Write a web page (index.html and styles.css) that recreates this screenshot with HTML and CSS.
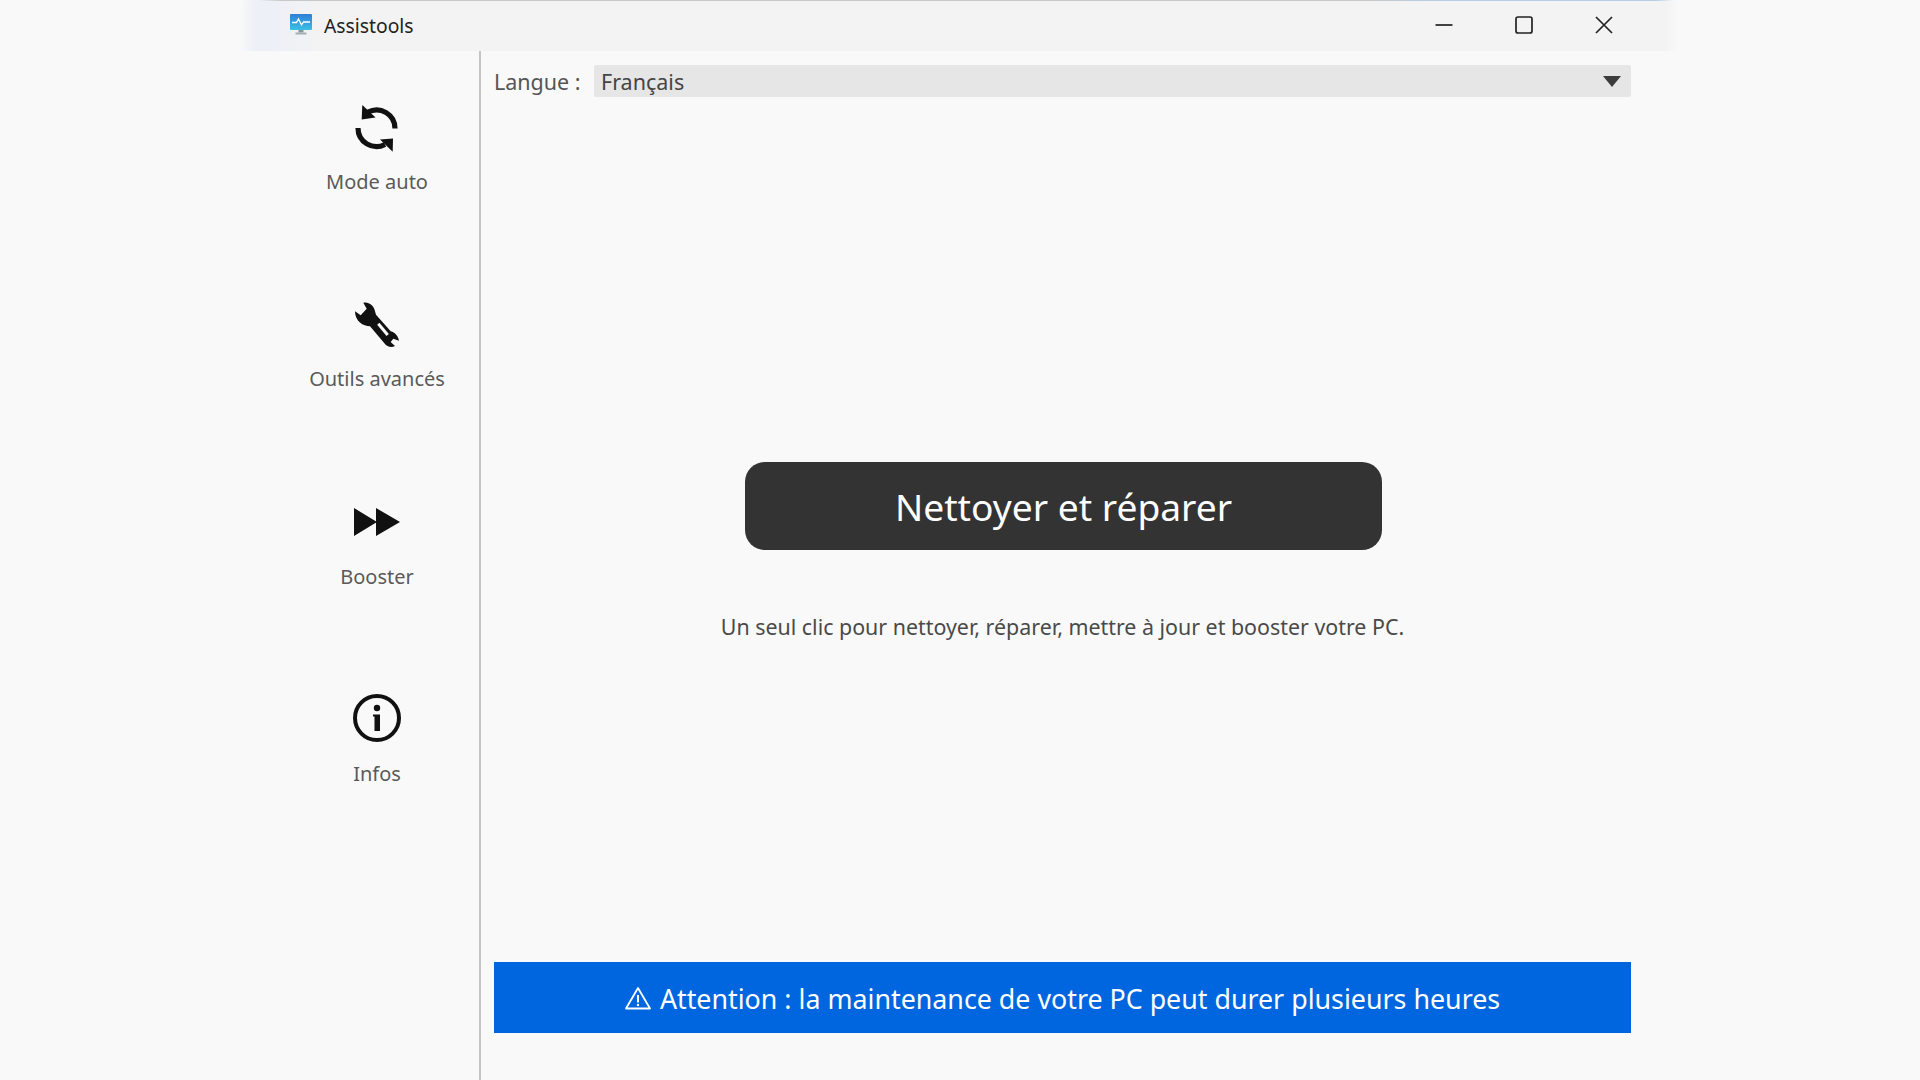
FILE: index.html
```html
<!DOCTYPE html>
<html lang="fr">
<head>
<meta charset="utf-8">
<title>Assistools</title>
<link rel="stylesheet" href="styles.css">
</head>
<body>
<div class="window">
  <header class="titlebar">
    <div class="title">
      <svg class="app-icon" viewBox="0 0 22 22" aria-hidden="true">
        <defs><linearGradient id="scr" x1="0" y1="0" x2="0" y2="1"><stop offset="0" stop-color="#2f7fd6"/><stop offset="1" stop-color="#3bbfe6"/></linearGradient></defs>
        <rect x="0" y="0" width="22" height="16" rx="1" fill="url(#scr)"/>
        <path d="M2 8.500h4.500l2-3.500 3 6 2-3h6.500" fill="none" stroke="#fff" stroke-width="1.300"/>
        <rect x="8.500" y="16" width="5" height="2.500" fill="#8a949c"/>
        <rect x="5.500" y="18.500" width="11" height="2" fill="#a6aeb5"/>
      </svg>
      <span class="app-name">Assistools</span>
    </div>
    <div class="controls">
      <span class="ctl"><svg viewBox="0 0 18 18" aria-hidden="true"><path d="M0.500 9h17" class="ctl-s"/></svg></span>
      <span class="ctl"><svg viewBox="0 0 18 18" aria-hidden="true"><rect x="1" y="1" width="16" height="16" rx="2" class="ctl-s"/></svg></span>
      <span class="ctl"><svg viewBox="0 0 18 18" aria-hidden="true"><path d="M1 1l16 16M17 1L1 17" class="ctl-s"/></svg></span>
    </div>
  </header>
  <div class="body">
    <nav class="sidebar">
      <div class="nav-item">
        <svg class="nav-icon" viewBox="0 -1 48 48" aria-hidden="true">
          <path d="M15 8A18.500 18.500 0 0 1 42 24.500" fill="none" stroke="#111" stroke-width="5.200"/>
          <path d="M9.300 1L8.700 15.500L22.500 13.500Z" fill="#111"/>
          <path d="M5 24A18.500 18.500 0 0 0 32 40.500" fill="none" stroke="#111" stroke-width="5.200"/>
          <path d="M40 34.500L39.700 47.700L27 35.500Z" fill="#111"/>
        </svg>
        <span class="nav-label">Mode auto</span>
      </div>
      <div class="nav-item">
        <svg class="nav-icon" viewBox="0 1 48 48" aria-hidden="true">
          <path d="M10.300 3.700C15.300 2.300 21 6.300 22 12.300L23 15.700L37.700 32.300C42 33.300 45.300 37.300 46 41.700L40.300 39.700L37.700 43L42 47C38 49 34 47.500 32 45L17 27.300C10.300 27.300 2 22.300 2 12.300L7.700 16.300L13.700 9.700Z" fill="#111"/>
          <path d="M25.300 24.700L34.700 36" stroke="#f9f9f9" stroke-width="3"/>
        </svg>
        <span class="nav-label">Outils avancés</span>
      </div>
      <div class="nav-item">
        <svg class="nav-icon" viewBox="0 0 48 48" aria-hidden="true">
          <path d="M1 10V38L24 24ZM23 10V38L47 24Z" fill="#111"/>
        </svg>
        <span class="nav-label">Booster</span>
      </div>
      <div class="nav-item">
        <svg class="nav-icon" viewBox="0 0 48 48" aria-hidden="true">
          <circle cx="24" cy="23" r="22" fill="none" stroke="#111" stroke-width="4"/>
          <circle cx="24" cy="13" r="3.200" fill="#111"/>
          <path d="M20 19.500H27V36H21.500V21.500H20Z" fill="#111"/>
        </svg>
        <span class="nav-label">Infos</span>
      </div>
    </nav>
    <main class="content">
      <div class="lang-row">
        <span class="lang-label">Langue :</span>
        <div class="select">
          <span>Français</span>
          <span class="caret"></span>
        </div>
      </div>
      <div class="center">
        <div class="primary">Nettoyer et réparer</div>
        <p class="hint">Un seul clic pour nettoyer, réparer, mettre à jour et booster votre PC.</p>
      </div>
      <div class="banner">
        <svg class="warn" viewBox="0 0 26 24" aria-hidden="true">
          <path d="M13 2L25 22.500H1Z" fill="none" stroke="#fff" stroke-width="1.800" stroke-linejoin="round"/>
          <path d="M13 9v7.500" stroke="#fff" stroke-width="2"/>
          <circle cx="13" cy="19" r="1.200" fill="#fff"/>
        </svg>
        <span>Attention : la maintenance de votre PC peut durer plusieurs heures</span>
      </div>
    </main>
  </div>
</div>
</body>
</html>
```

FILE: styles.css
```css
* { box-sizing: border-box; }
html, body { margin: 0; height: 100%; }
body {
  background: #f9f9f9;
  font-family: "Noto Sans", "Open Sans", sans-serif;
  overflow: hidden;
}
.window {
  width: 1440px;
  height: 1080px;
  margin: 0 auto;
  display: flex;
  flex-direction: column;
}
.titlebar {
  height: 51px;
  flex: none;
  display: flex;
  align-items: center;
  justify-content: space-between;
  padding: 0 36.500px 2px 50px;
  background: linear-gradient(90deg, #f9f9f9 0, #eef0f7 14px, #eef0f7 34px, #f3f3f3 80px, #f3f3f3 1425px, #f9f9f9 1440px);
  border-top: 1px solid;
  border-image: linear-gradient(90deg, transparent 20px, #c8c8c8 42px, #c8c8c8 1130px, #b4cfe6 1200px, #b4cfe6 1415px, transparent 1432px) 1;
}
.title { display: flex; align-items: center; gap: 12px; }
.app-icon { width: 22px; height: 22px; }
.app-name { font-size: 19.300px; color: #222; }
.controls { display: flex; }
.ctl { width: 80px; display: flex; justify-content: center; }
.ctl svg { width: 18px; height: 18px; overflow: visible; }
.ctl-s { fill: none; stroke: #222; stroke-width: 1.700; }
.body { flex: 1; display: flex; min-height: 0; }
.sidebar {
  width: 241px;
  flex: none;
  padding: 52px 0 0 35px;
  border-right: 2px solid #c4c4c4;
  display: flex;
  flex-direction: column;
  align-items: center;
}
.nav-item {
  height: 197.300px;
  display: flex;
  flex-direction: column;
  align-items: center;
  gap: 17px;
}
.nav-icon { width: 48px; height: 48px; overflow: visible; }
.nav-label { font-size: 20px; line-height: 27px; color: #5a5a5a; }
.content {
  flex: 1;
  display: flex;
  flex-direction: column;
  padding: 14px 49px 47px 13px;
}
.lang-row { display: flex; align-items: center; height: 32px; flex: none; }
.lang-label { font-size: 21.500px; color: #555; width: 100px; }
.select {
  flex: 1;
  height: 32px;
  background: #e6e6e6;
  border-radius: 2px;
  display: flex;
  align-items: center;
  justify-content: space-between;
  padding: 0 10px 0 7px;
  font-size: 21.500px;
  color: #444;
}
.caret {
  width: 0; height: 0;
  border-left: 9px solid transparent;
  border-right: 9px solid transparent;
  border-top: 11px solid #3c3c3c;
}
.center {
  flex: 1;
  display: flex;
  flex-direction: column;
  align-items: center;
  padding-top: 365px;
}
.primary {
  width: 637px;
  height: 88px;
  margin-left: 2px;
  background: #333;
  border-radius: 20px;
  display: flex;
  align-items: center;
  justify-content: center;
  color: #fff;
  font-size: 37.200px;
}
.hint {
  margin: 62px 0 0;
  font-size: 21.400px;
  line-height: 30px;
  color: #4a4a4a;
}
.banner {
  height: 71px;
  flex: none;
  padding-top: 1px;
  background: #0066e0;
  color: #fff;
  font-size: 26.800px;
  display: flex;
  align-items: center;
  justify-content: center;
  gap: 9px;
}
.warn { width: 26px; height: 24px; }
```
